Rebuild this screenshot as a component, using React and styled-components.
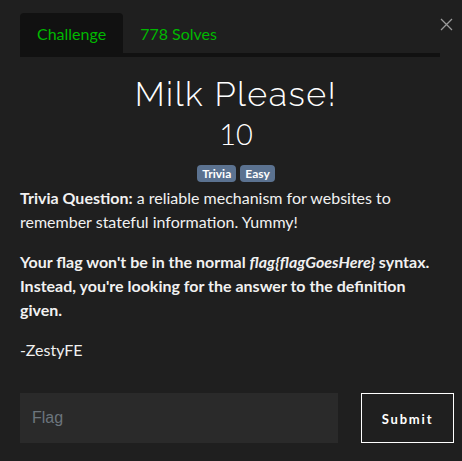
import React from 'react'
import styled, { createGlobalStyle } from 'styled-components'

const Global = createGlobalStyle`
  html, body {
    margin: 0;
    padding: 0;
    background: #1f1f1f;
  }
  body {
    font-family: Lato, "Open Sans", sans-serif;
    color: #f1f1f1;
  }
`

const Modal = styled.div`
  position: relative;
  width: 462px;
  height: 461px;
  box-sizing: border-box;
  padding: 13px 10px 0 20px;
  background: #1f1f1f;
`

const Close = styled.button`
  position: absolute;
  top: 18px;
  right: 9px;
  width: 13px;
  height: 13px;
  padding: 0;
  border: none;
  background: none;
  color: #9a9a9a;
  cursor: pointer;
`

const Tabs = styled.div`
  display: flex;
  margin-right: 12px;
  border-bottom: 4px solid #111;
`

const Tab = styled.div`
  height: 40px;
  padding: 0 17px;
  display: flex;
  align-items: center;
  font-size: 16px;
  color: #00b800;
  border-radius: 4px 4px 0 0;
  background: ${p => (p.$active ? '#111' : 'transparent')};
`

const Body = styled.div`
  display: flex;
  flex-direction: column;
`

const Title = styled.h2`
  margin: 15px 0 0;
  text-align: center;
  font-family: Raleway, "Open Sans", sans-serif;
  font-weight: 300;
  font-size: 34px;
  line-height: 44px;
  letter-spacing: 1.5px;
  color: #fff;
`

const Value = styled.h3`
  margin: 0;
  text-align: center;
  font-weight: 300;
  font-size: 29px;
  line-height: 36px;
  color: #fff;
`

const Tags = styled.div`
  display: flex;
  justify-content: center;
  gap: 4px;
  margin-top: 13px;
`

const Tag = styled.span`
  height: 17px;
  line-height: 17px;
  padding: 0 5px;
  border-radius: 4px;
  background: #5b7290;
  color: #fff;
  font-size: 12px;
  font-weight: 700;
`

const Description = styled.div`
  margin-top: 4px;
  padding-right: 14px;
  font-size: 16px;
  line-height: 24px;
  color: #f1f1f1;

  p {
    margin: 0 0 16px;
  }
`

const Form = styled.form`
  display: flex;
  gap: 23px;
  margin-top: 15px;
  margin-right: -2px;
`

const FlagInput = styled.input`
  width: 318px;
  height: 50px;
  box-sizing: border-box;
  padding: 0 12px;
  border: none;
  background: #2a2a2a;
  color: #fff;
  font-family: "Liberation Sans", Arial, sans-serif;
  font-size: 16px;
  outline: none;

  &::placeholder {
    color: #6c757d;
  }
`

const SubmitButton = styled.button`
  width: 93px;
  height: 50px;
  box-sizing: border-box;
  border: 1px solid #fff;
  background: transparent;
  color: #fff;
  font-family: Lato, sans-serif;
  font-weight: 700;
  font-size: 13px;
  letter-spacing: 1.8px;
  padding-top: 2px;
`

export default function App() {
  return (
    <>
      <Global />
      <Modal>
        <Close aria-label="Close">
          <svg width="13" height="13" viewBox="0 0 13 13">
            <path d="M1 1 L12 12 M12 1 L1 12" stroke="currentColor" strokeWidth="1.3" />
          </svg>
        </Close>
        <Tabs>
          <Tab $active>Challenge</Tab>
          <Tab>778 Solves</Tab>
        </Tabs>
        <Body>
          <Title>Milk Please!</Title>
          <Value>10</Value>
          <Tags>
            <Tag>Trivia</Tag>
            <Tag>Easy</Tag>
          </Tags>
          <Description>
            <p>
              <strong>Trivia Question:</strong> a reliable mechanism for websites to remember stateful information. Yummy!
            </p>
            <p>
              <strong>
                Your flag won't be in the normal <em>flag{'{'}flagGoesHere{'}'}</em> syntax. Instead, you're looking for the answer to the definition given.
              </strong>
            </p>
            <p>-ZestyFE</p>
          </Description>
          <Form onSubmit={e => e.preventDefault()}>
            <FlagInput placeholder="Flag" />
            <SubmitButton type="submit">Submit</SubmitButton>
          </Form>
        </Body>
      </Modal>
    </>
  )
}
